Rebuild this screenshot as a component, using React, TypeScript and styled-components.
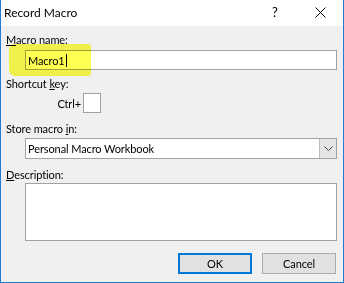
import React from "react";
import styled, { createGlobalStyle } from "styled-components";

const GlobalStyle = createGlobalStyle`
  html, body { margin: 0; padding: 0; background: #f0f0f0; }
  body { font-family: "Lato", "Liberation Sans", sans-serif; }
  * { box-sizing: border-box; }
`;

const Window = styled.div`
  width: 344px;
  height: 283px;
  display: flex;
  flex-direction: column;
  border: 1px solid #1c7fd6;
  border-top: none;
  background: #f0f0f0;
  overflow: hidden;
`;

const TitleBar = styled.div`
  height: 26px;
  flex: 0 0 26px;
  display: flex;
  align-items: center;
  background: #ffffff;
  padding: 0 0 2px 3px;
`;

const Title = styled.div`
  flex: 1;
  font-size: 12px;
  color: #000;
  white-space: nowrap;
`;

const TitleButton = styled.div<{ $w: number }>`
  width: ${(p) => p.$w}px;
  height: 24px;
  display: flex;
  align-items: center;
  justify-content: center;
  font-size: 13px;
  color: #000;
`;

const Body = styled.div`
  position: relative;
  flex: 1;
  display: flex;
  flex-direction: column;
  padding: 6px 6px 0 5px;
  font-size: 11px;
  letter-spacing: -0.1px;
  color: #000;
`;

const Label = styled.div<{ $mt: number }>`
  height: 15px;
  line-height: 15px;
  margin-top: ${(p) => p.$mt}px;
  white-space: nowrap;
`;

const Key = styled.span`
  text-decoration: underline;
  text-underline-offset: 1px;
`;

const Field = styled.div<{ $mt: number; $h: number }>`
  margin-top: ${(p) => p.$mt}px;
  margin-left: 19px;
  height: ${(p) => p.$h}px;
  flex: 0 0 ${(p) => p.$h}px;
  background: #ffffff;
  border: 1px solid #a2a2a2;
  display: flex;
  align-items: center;
  padding-left: 2px;
  white-space: nowrap;
`;

const Caret = styled.span`
  display: inline-block;
  width: 1px;
  height: 13px;
  background: #000;
  margin-left: 1px;
`;

const Highlight = styled.div`
  position: absolute;
  left: 8px;
  top: 18px;
  width: 82px;
  height: 32px;
  background: #ffff52;
  mix-blend-mode: multiply;
  border-radius: 5px 3px 3px 6px;
  filter: blur(0.4px);
  pointer-events: none;
`;

const ShortcutRow = styled.div`
  margin-top: 2px;
  height: 20px;
  display: flex;
  align-items: center;
`;

const CtrlLabel = styled.div`
  flex: 0 0 75px;
  text-align: right;
  white-space: nowrap;
`;

const KeyBox = styled.div`
  margin-left: 2px;
  width: 18px;
  height: 20px;
  background: #ffffff;
  border: 1px solid #a2a2a2;
`;

const SelectText = styled.div`
  flex: 1;
`;

const DropButton = styled.div`
  align-self: stretch;
  width: 17px;
  background: #e5e5e5;
  border-left: 1px solid #bcbcbc;
  display: flex;
  align-items: center;
  justify-content: center;
`;

const ButtonRow = styled.div`
  margin-top: 12px;
  padding-right: 1px;
  display: flex;
  justify-content: flex-end;
  gap: 10px;
`;

const Button = styled.div<{ $primary?: boolean }>`
  width: 74px;
  height: 21px;
  background: #e1e1e1;
  border: ${(p) => (p.$primary ? "2px solid #0078d7" : "1px solid #adadad")};
  display: flex;
  align-items: center;
  justify-content: center;
  font-size: 11px;
`;

export default function App() {
  return (
    <>
      <GlobalStyle />
      <Window>
        <TitleBar>
          <Title>Record Macro</Title>
          <TitleButton $w={44}>?</TitleButton>
          <TitleButton $w={46}>
            <svg width="11" height="11" viewBox="0 0 11 11">
              <path d="M0.5 0.5 L10.5 10.5 M10.5 0.5 L0.5 10.5" stroke="#000" strokeWidth="1" fill="none" />
            </svg>
          </TitleButton>
        </TitleBar>
        <Body>
          <Label $mt={0}>
            <Key>M</Key>acro name:
          </Label>
          <Field $mt={3} $h={20}>
            Macro1
            <Caret />
          </Field>
          <Label $mt={6}>
            Shortcut <Key>k</Key>ey:
          </Label>
          <ShortcutRow>
            <CtrlLabel>Ctrl+</CtrlLabel>
            <KeyBox />
          </ShortcutRow>
          <Label $mt={8}>
            Store macro <Key>i</Key>n:
          </Label>
          <Field $mt={2} $h={21}>
            <SelectText>Personal Macro Workbook</SelectText>
            <DropButton>
              <svg width="9" height="5" viewBox="0 0 9 5">
                <path d="M0.5 0.5 L4.5 4.5 L8.5 0.5" stroke="#404040" strokeWidth="1" fill="none" />
              </svg>
            </DropButton>
          </Field>
          <Label $mt={8}>
            <Key>D</Key>escription:
          </Label>
          <Field $mt={1} $h={58} />
          <ButtonRow>
            <Button $primary>OK</Button>
            <Button>Cancel</Button>
          </ButtonRow>
          <Highlight />
        </Body>
      </Window>
    </>
  );
}
